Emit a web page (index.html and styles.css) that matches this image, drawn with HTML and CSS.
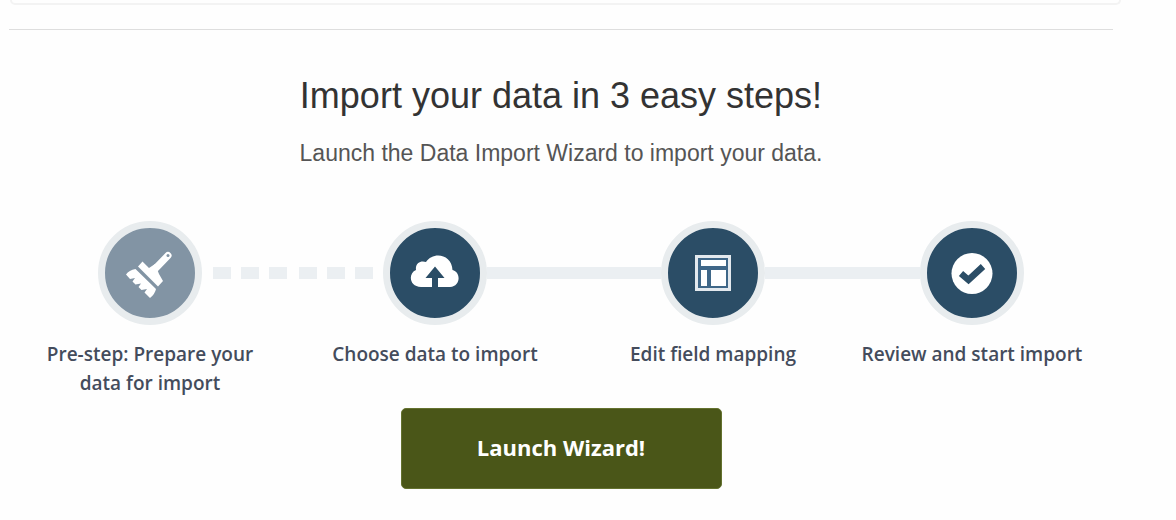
FILE: index.html
```html
<!DOCTYPE html>
<html lang="en">
<head>
<meta charset="utf-8">
<title>Data Import Wizard</title>
<link rel="stylesheet" href="styles.css">
</head>
<body>
<div class="panel-end"></div>
<main class="wizard">
  <header class="intro">
    <h1 class="title">Import your data in 3 easy steps!</h1>
    <p class="subtitle">Launch the Data Import Wizard to import your data.</p>
  </header>
  <ol class="steps">
    <li class="step">
      <div class="track">
        <span class="line none"></span>
        <span class="badge muted">
          <svg viewBox="0 0 90 90" aria-hidden="true">
            <path d="M49 42L63 27.500" stroke="#fff" stroke-width="7" stroke-linecap="round"/>
            <circle cx="63" cy="27.500" r="1.500" fill="#8294a4"/>
            <path fill="#fff" d="M37.500 33.500L44 40L50 36L54 46L58 53L53 58.500L33 38.500Z"/>
            <path fill="#fff" d="M30.500 41L51 61Q50 66 45 70L39.500 64.500L42 61L36.500 62L33.500 59L36 55.500L30.500 56.500L27.500 53.500L30 50L25 51L21 46.500Q24 42 30.500 41Z"/>
          </svg>
        </span>
        <span class="line dashed out"><i></i><i></i><i></i></span>
      </div>
      <p class="label">Pre-step: Prepare your data for import</p>
    </li>
    <li class="step">
      <div class="track">
        <span class="line dashed in"><i></i><i></i><i></i></span>
        <span class="badge">
          <svg viewBox="0 0 90 90" aria-hidden="true">
            <path fill="#fff" d="M31 59C19 59 18 45 26 42C25 35 31 32 36 34C43 23 62 26 62.500 42C71 44 71 58 60 59H48V50H54.500L45 38.500L35.500 50H42V59Z"/>
          </svg>
        </span>
        <span class="line solid"></span>
      </div>
      <p class="label">Choose data to import</p>
    </li>
    <li class="step">
      <div class="track">
        <span class="line solid"></span>
        <span class="badge">
          <svg viewBox="0 0 90 90" aria-hidden="true">
            <path fill="#3f6788" d="M27 27H63V63H27Z"/>
            <path fill="none" stroke="#e3e9ee" stroke-width="3" d="M28.500 28.500H61.500V61.500H28.500Z"/>
            <path fill="#fff" d="M33 32H58V38H33ZM33 42H39V58H33ZM43 42H58V58H43Z"/>
          </svg>
        </span>
        <span class="line solid"></span>
      </div>
      <p class="label">Edit field mapping</p>
    </li>
    <li class="step">
      <div class="track">
        <span class="line solid"></span>
        <span class="badge">
          <svg viewBox="0 0 90 90" aria-hidden="true">
            <circle cx="45" cy="45.500" r="20.500" fill="#fff"/>
            <path d="M34 45.500L41.500 52L56 38.500" fill="none" stroke="#2b4d66" stroke-width="6.500"/>
          </svg>
        </span>
        <span class="line none"></span>
      </div>
      <p class="label">Review and start import</p>
    </li>
  </ol>
  <button class="launch" type="button">Launch Wizard!</button>
</main>
</body>
</html>
```
FILE: styles.css
```css
* {
  box-sizing: border-box;
}

body {
  margin: 0;
  background: #fefefe;
  font-family: "Open Sans", "Noto Sans", sans-serif;
}

.panel-end {
  height: 5px;
  margin: 0 55px 24px 10px;
  border: solid #f3f3f3;
  border-width: 0 2px 2px;
  border-radius: 0 0 5px 5px;
}

.wizard {
  display: flex;
  flex-direction: column;
  margin: 0 63px 0 9px;
  border-top: 1px solid #dedede;
}

.intro {
  padding-top: 44px;
  text-align: center;
  font-family: "Liberation Sans", Arial, sans-serif;
}

.title {
  margin: 0;
  font-size: 36px;
  font-weight: 400;
  line-height: 44px;
  color: #333;
}

.subtitle {
  margin: 21px 0 0;
  font-size: 23px;
  line-height: 28px;
  color: #555;
}

.steps {
  display: grid;
  grid-template-columns: 282fr 288fr 268fr 250fr;
  margin: 54px 0 0;
  padding: 0 16px 0 0;
  list-style: none;
}

.track {
  display: flex;
  align-items: center;
}

.badge {
  flex: none;
  width: 104px;
  height: 104px;
  border: 7px solid #e8ecee;
  border-radius: 50%;
  background: #2b4d66;
}

.badge.muted {
  background: #8294a4;
}

.badge svg {
  display: block;
  fill: none;
}

.line {
  flex: 1;
  height: 12px;
}

.solid {
  background: #ebeff2;
}

.dashed {
  display: flex;
  gap: 10px;
}

.dashed i {
  width: 18px;
  background: #ebeff2;
}

.out i:first-child {
  margin-left: 11px;
}

.in i:first-child {
  margin-left: 8px;
}

.label {
  max-width: 240px;
  margin: 15px auto 0;
  font-size: 19px;
  font-weight: 600;
  line-height: 29px;
  text-align: center;
  color: #444c5c;
}

.launch {
  align-self: center;
  width: 321px;
  height: 81px;
  margin-top: 10px;
  padding: 0 0 4px;
  border: 1px solid #64722f;
  border-radius: 5px;
  background: #4a5618;
  font: inherit;
  font-size: 22px;
  font-weight: 700;
  color: #fff;
}
```
